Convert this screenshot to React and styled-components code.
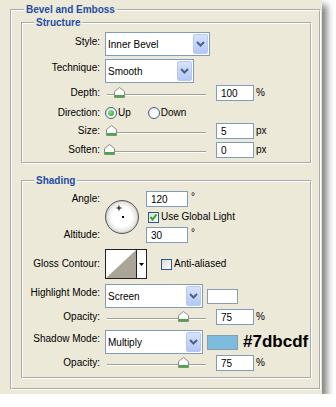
import styled, { createGlobalStyle } from "styled-components";

const GlobalStyle = createGlobalStyle`
  body {
    margin: 0;
    background: #fff;
  }
`;

const Dialog = styled.div`
  box-sizing: border-box;
  width: 322px;
  padding: 3px 1px 4px 10px;
  background: #ece9d8;
  box-shadow: 5px 5px 7px rgba(0, 0, 0, 0.5);
  font-family: "Liberation Sans", Arial, sans-serif;
  font-size: 10px;
  line-height: 12px;
  color: #000;
`;

const Group = styled.fieldset`
  margin: ${(p) => p.$mt || 0}px 0 0;
  padding: ${(p) => p.$pt || 0}px ${(p) => p.$pr || 0}px ${(p) => p.$pb || 0}px
    ${(p) => p.$pl || 0}px;
  border: 2px groove #fff;
  min-width: 0;
`;

const Caption = styled.legend`
  margin-left: ${(p) => p.$ml}px;
  padding: 0 2px;
  font-size: 10px;
  font-weight: bold;
  line-height: 14px;
  color: #1f4da6;
`;

const Row = styled.div`
  display: grid;
  grid-template-columns: 77px auto;
  column-gap: 5px;
  align-items: center;
  justify-content: start;
  height: ${(p) => p.$h}px;
  margin-top: ${(p) => p.$mt || 0}px;
`;

const Label = styled.span`
  text-align: right;
  white-space: nowrap;
  align-self: ${(p) => (p.$top != null ? "start" : "center")};
  padding-top: ${(p) => p.$top || 0}px;
  grid-area: ${(p) => p.$area || "auto"};
`;

const Controls = styled.div`
  display: flex;
  align-items: center;
  grid-area: ${(p) => p.$area || "auto"};
`;

const SelectBox = styled.div`
  box-sizing: border-box;
  display: flex;
  width: ${(p) => p.$w}px;
  height: 24px;
  padding: 1px;
  border: 1px solid #7f9db9;
  background: #fff;
`;

const SelectText = styled.span`
  flex: 1;
  align-self: center;
  padding: 1px 0 0 1px;
`;

const ArrowButton = styled.span`
  box-sizing: border-box;
  display: flex;
  align-items: center;
  justify-content: center;
  width: 15px;
  border: 1px solid #b7c8f3;
  border-radius: 2px;
  background: linear-gradient(#d7e2fc, #b4c8f6);
`;

const NumInput = styled.input`
  box-sizing: border-box;
  width: ${(p) => p.$w}px;
  height: 16px;
  margin: 0 0 0 ${(p) => p.$ml || 0}px;
  padding: 1px 0 0 4px;
  border: 1px solid #7f9db9;
  background: #fff;
  font-family: "Liberation Sans", Arial, sans-serif;
  font-size: 10px;
  color: #000;
  outline: none;
`;

const Unit = styled.span`
  margin-left: ${(p) => p.$ml || 2}px;
  align-self: ${(p) => (p.$up ? "flex-start" : "center")};
`;

const Slider = styled.div`
  position: relative;
  width: 104px;
  height: 16px;
`;

const Track = styled.div`
  margin: 9px 3px 0 2px;
  height: 0;
  border-top: 1px solid #a19f92;
  border-bottom: 1px solid #fff;
`;

const Thumb = styled.svg`
  position: absolute;
  top: 2px;
`;

const Option = styled.label`
  display: flex;
  align-items: center;
  gap: 1px;
  margin-right: ${(p) => p.$mr || 0}px;
`;

const RadioDot = styled.span`
  box-sizing: border-box;
  display: flex;
  align-items: center;
  justify-content: center;
  width: 12px;
  height: 12px;
  border: 1px solid #3f5f86;
  border-radius: 50%;
  background: radial-gradient(circle at 65% 65%, #fff 35%, #dedcd2 100%);

  &::after {
    content: "";
    width: 6px;
    height: 6px;
    border-radius: 50%;
    background: ${(p) =>
      p.$on ? "radial-gradient(circle at 35% 35%, #8ee08e, #2a9d2a)" : "transparent"};
  }
`;

const CheckBox = styled.span`
  box-sizing: border-box;
  display: flex;
  align-items: center;
  justify-content: center;
  width: 11px;
  height: 11px;
  border: 1px solid #2c5a86;
  background: linear-gradient(135deg, #dcdbd3, #fff);
`;

const CheckOption = styled.label`
  display: flex;
  align-items: center;
  gap: 2px;
  margin-left: ${(p) => p.$ml || 0}px;
  grid-area: ${(p) => p.$area || "auto"};
`;

const AngleGrid = styled.div`
  display: grid;
  grid-template-columns: 77px 36px auto;
  grid-template-rows: 16px 20px 16px;
  grid-template-areas:
    "angle dial a1"
    ". dial chk"
    "alt dial a2";
  column-gap: 5px;
  align-items: center;
  justify-content: start;
  margin-top: 3px;
`;

const Dial = styled.svg`
  grid-area: dial;
  align-self: center;
`;

const Contour = styled.div`
  box-sizing: border-box;
  display: flex;
  width: 42px;
  height: 30px;
  border: 1px solid #222;
  background: #fff;
`;

const ContourArrow = styled.span`
  display: flex;
  flex: 1;
  align-items: center;
  justify-content: center;
  border-left: 1px solid #222;
`;

const Swatch = styled.span`
  box-sizing: border-box;
  width: 31px;
  height: 15px;
  margin-left: 4px;
  border: 1px solid #8d9bab;
  background: ${(p) => p.$color};
`;

const Hex = styled.span`
  margin-left: 5px;
  font-size: 17px;
  font-weight: bold;
  line-height: 18px;
`;

const Select = ({ w, value }) => (
  <SelectBox $w={w}>
    <SelectText>{value}</SelectText>
    <ArrowButton>
      <svg width="9" height="6" viewBox="0 0 9 6">
        <polyline points="1,1 4.5,4.5 8,1" fill="none" stroke="#4d6185" strokeWidth="2" />
      </svg>
    </ArrowButton>
  </SelectBox>
);

const SliderRow = ({ label, value, max, unit, mt }) => (
  <Row $h={16} $mt={mt}>
    <Label>{label}</Label>
    <Controls>
      <Slider>
        <Track />
        <Thumb
          width="11"
          height="11"
          viewBox="0 0 11 11"
          style={{ left: `${(value / max) * 99 - 1}px` }}
        >
          <path d="M0.5 4.5 L5.5 0.5 L10.5 4.5 V10.5 H0.5 Z" fill="#fff" stroke="#8b8b86" />
          <rect x="1" y="8" width="9" height="2" fill="#3fae3f" />
        </Thumb>
      </Slider>
      <NumInput $w={38} $ml={7} readOnly value={value} />
      <Unit>{unit}</Unit>
    </Controls>
  </Row>
);

const Check = ({ on }) => (
  <CheckBox>
    {on && (
      <svg width="9" height="9" viewBox="0 0 9 9">
        <polyline points="1.5,4 3.5,6.5 7.5,1.5" fill="none" stroke="#22a322" strokeWidth="2" />
      </svg>
    )}
  </CheckBox>
);

export default function App() {
  return (
    <>
      <GlobalStyle />
      <Dialog>
        <Group $pl={9} $pr={7} $pb={9}>
          <Caption $ml={3}>Bevel and Emboss</Caption>

          <Group $mt={-1} $pt={2} $pb={4}>
            <Caption $ml={11}>Structure</Caption>
            <Row $h={24}>
              <Label $top={4}>Style:</Label>
              <Select w={105} value="Inner Bevel" />
            </Row>
            <Row $h={24} $mt={3}>
              <Label $top={3}>Technique:</Label>
              <Select w={89} value="Smooth" />
            </Row>
            <SliderRow label="Depth:" value={100} max={1000} unit="%" mt={2} />
            <Row $h={18} $mt={3}>
              <Label>Direction:</Label>
              <Controls>
                <Option $mr={17}>
                  <RadioDot $on />
                  Up
                </Option>
                <Option>
                  <RadioDot />
                  Down
                </Option>
              </Controls>
            </Row>
            <SliderRow label="Size:" value={5} max={250} unit="px" mt={1} />
            <SliderRow label="Soften:" value={0} max={16} unit="px" mt={3} />
          </Group>

          <Group $mt={10} $pb={6}>
            <Caption $ml={11}>Shading</Caption>
            <AngleGrid>
              <Label $area="angle">Angle:</Label>
              <Dial width="34" height="34" viewBox="0 0 34 34">
                <defs>
                  <radialGradient id="dialFill" cx="50%" cy="50%" r="50%">
                    <stop offset="0.6" stopColor="#fff" />
                    <stop offset="0.88" stopColor="#e4e4e0" />
                    <stop offset="1" stopColor="#b9b9b4" />
                  </radialGradient>
                </defs>
                <circle cx="17" cy="17" r="16.5" fill="url(#dialFill)" stroke="#5c5c5c" />
                <path d="M11.5 8h5M14 5.5v5" stroke="#000" strokeWidth="1" />
                <rect x="17" y="16" width="2" height="2" fill="#000" />
              </Dial>
              <Controls $area="a1">
                <NumInput $w={42} readOnly value="120" />
                <Unit $ml={3} $up>°</Unit>
              </Controls>
              <CheckOption $area="chk" $ml={2}>
                <Check on />
                Use Global Light
              </CheckOption>
              <Label $area="alt">Altitude:</Label>
              <Controls $area="a2">
                <NumInput $w={42} readOnly value="30" />
                <Unit $ml={3} $up>°</Unit>
              </Controls>
            </AngleGrid>

            <Row $h={30} $mt={6}>
              <Label>Gloss Contour:</Label>
              <Controls>
                <Contour>
                  <svg width="30" height="28" viewBox="0 0 30 28">
                    <polygon points="0,28 30,0 30,28" fill="#aaa597" />
                  </svg>
                  <ContourArrow>
                    <svg width="5" height="3" viewBox="0 0 5 3">
                      <polygon points="0,0 5,0 2.5,3" fill="#000" />
                    </svg>
                  </ContourArrow>
                </Contour>
                <CheckOption $ml={14}>
                  <Check />
                  Anti-aliased
                </CheckOption>
              </Controls>
            </Row>

            <Row $h={24} $mt={5}>
              <Label $top={3}>Highlight Mode:</Label>
              <Controls>
                <Select w={98} value="Screen" />
                <Swatch $color="#fff" />
              </Controls>
            </Row>
            <SliderRow label="Opacity:" value={75} max={100} unit="%" mt={1} />
            <Row $h={24} $mt={5}>
              <Label $top={3}>Shadow Mode:</Label>
              <Controls>
                <Select w={98} value="Multiply" />
                <Swatch $color="#7dbcdf" />
                <Hex>#7dbcdf</Hex>
              </Controls>
            </Row>
            <SliderRow label="Opacity:" value={75} max={100} unit="%" mt={1} />
          </Group>
        </Group>
      </Dialog>
    </>
  );
}
